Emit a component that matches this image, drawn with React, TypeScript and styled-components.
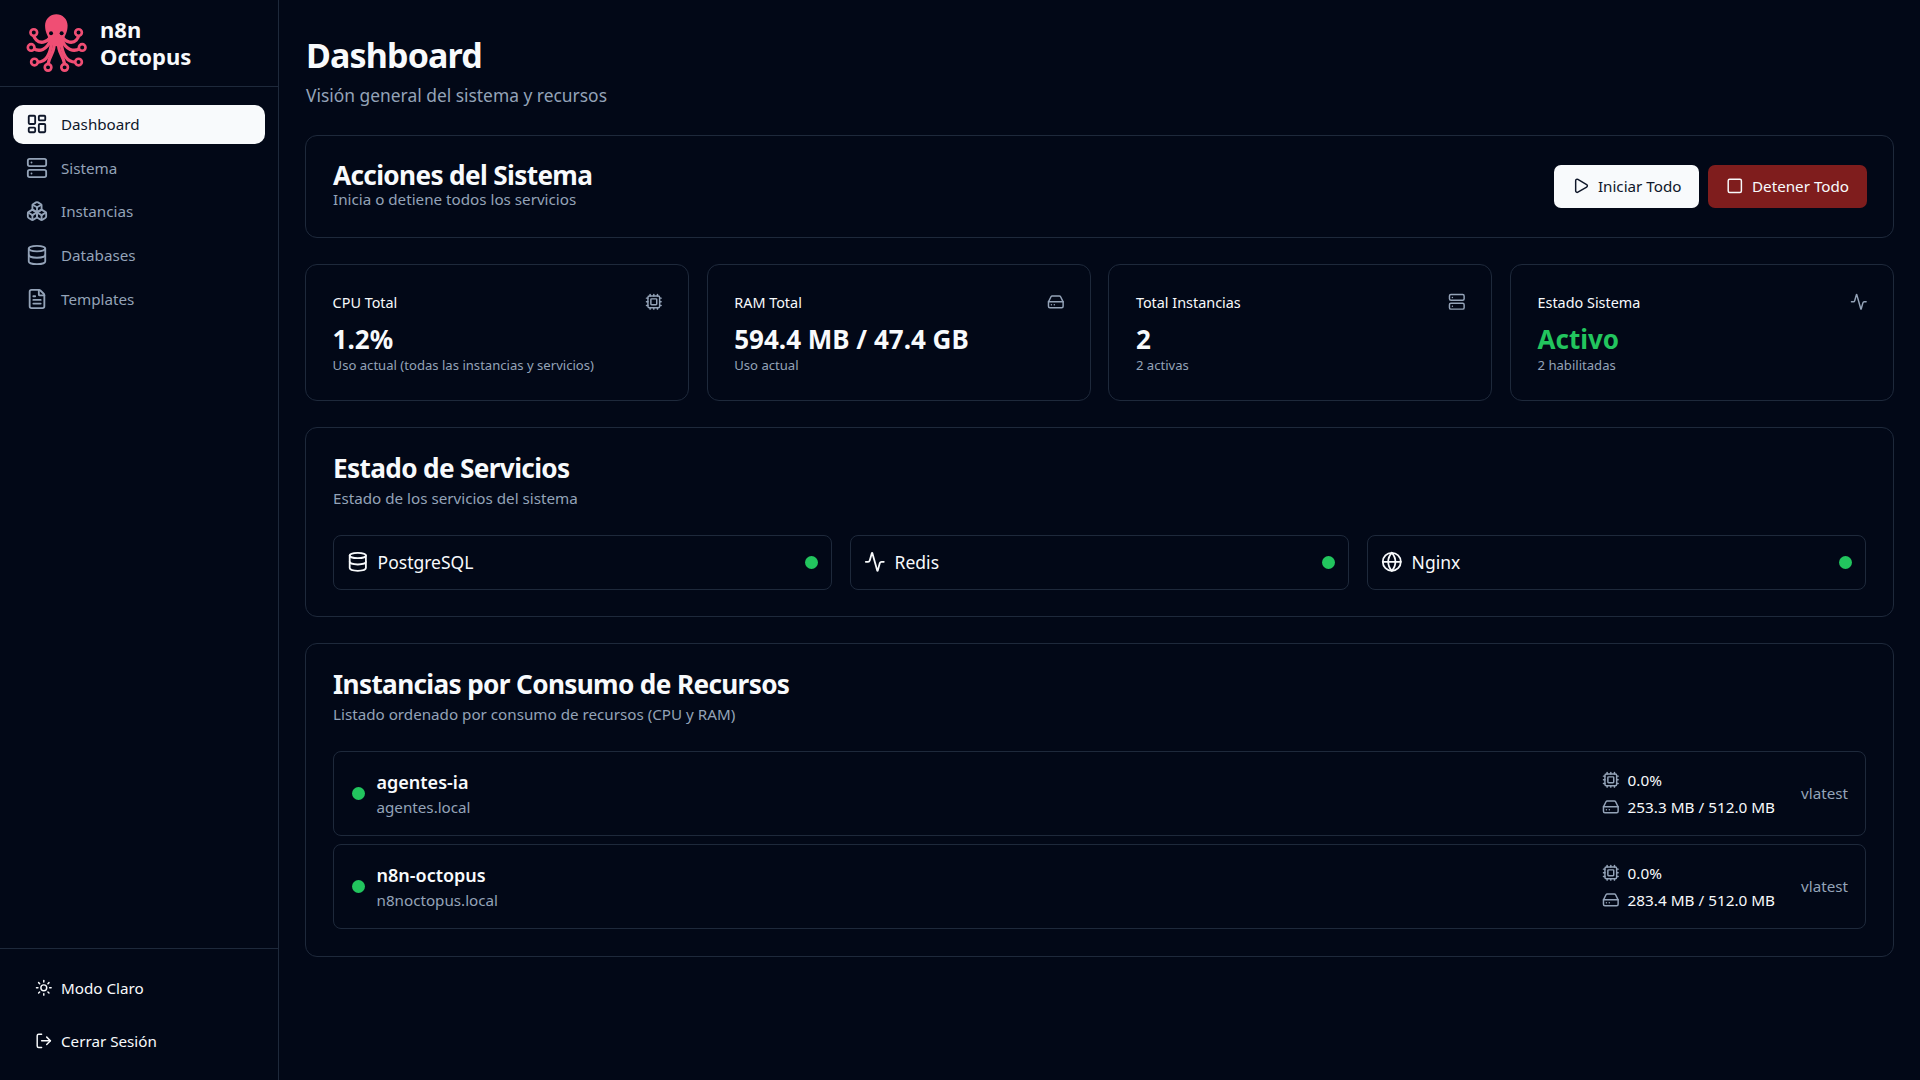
import React from "react";
import styled, { createGlobalStyle } from "styled-components";
import {
  Activity,
  Boxes,
  Cpu,
  Database,
  FileText,
  Globe,
  HardDrive,
  LayoutDashboard,
  LogOut,
  Play,
  Server,
  Square,
  Sun,
} from "lucide-react";

const GlobalStyle = createGlobalStyle`
  html, body, #root {
    margin: 0;
    height: 100%;
  }
  body {
    background: #020817;
    color: #f8fafc;
    font-family: "Noto Sans", sans-serif;
  }
  * {
    box-sizing: border-box;
  }
`;

const Shell = styled.div`
  display: flex;
  height: 1080px;
  overflow: hidden;
`;

const Sidebar = styled.aside`
  width: 279px;
  flex-shrink: 0;
  border-right: 1px solid #1e293b;
  display: flex;
  flex-direction: column;
`;

const Brand = styled.div`
  height: 87px;
  padding-left: 25px;
  border-bottom: 1px solid #1e293b;
  display: flex;
  align-items: center;
  gap: 11px;
`;

const BrandName = styled.div`
  font-size: 22px;
  line-height: 27px;
  font-weight: 700;
`;

const Nav = styled.nav`
  flex: 1;
  padding: 18.4px 13px;
  display: flex;
  flex-direction: column;
  gap: 4.75px;
`;

const NavItem = styled.a<{ $active?: boolean }>`
  height: 39px;
  padding: 0 0 2px 13px;
  border-radius: 10px;
  display: flex;
  align-items: center;
  gap: 13px;
  font-size: 15.2px;
  color: ${(props) => (props.$active ? "#0f172a" : "#94a3b8")};
  background: ${(props) => (props.$active ? "#f8fafc" : "transparent")};
`;

const SidebarFooter = styled.div`
  height: 132px;
  padding: 19px 35px 0;
  border-top: 1px solid #1e293b;
  display: flex;
  flex-direction: column;
  gap: 13px;
`;

const FooterItem = styled.a`
  height: 40px;
  display: flex;
  align-items: center;
  gap: 8.4px;
  font-size: 15.2px;
  color: #f8fafc;
`;

const Main = styled.main`
  flex: 1;
  padding: 34px 26px 0;
  display: flex;
  flex-direction: column;
`;

const PageTitle = styled.h1`
  margin: 0 0 0 1px;
  font-size: 34px;
  line-height: 42px;
  font-weight: 700;
  letter-spacing: -0.025em;
`;

const PageSubtitle = styled.p`
  margin: 7px 0 28px 1px;
  font-size: 17.4px;
  line-height: 24px;
  color: #94a3b8;
`;

const Card = styled.section`
  border: 1px solid #1e293b;
  border-radius: 12px;
  padding: 23px 27px 26px;
`;

const ActionsCard = styled(Card)`
  height: 103px;
  padding: 0 26px 0 27px;
  display: flex;
  align-items: center;
  justify-content: space-between;
`;

const ActionsText = styled.div`
  padding-bottom: 2px;
`;

const ActionsTitle = styled.h2`
  margin: 0;
  font-size: 26.2px;
  line-height: 27px;
  font-weight: 700;
  letter-spacing: -0.025em;
`;

const CardSubtitle = styled.p`
  margin: 0;
  font-size: 15.2px;
  line-height: 20px;
  color: #94a3b8;
`;

const Buttons = styled.div`
  display: flex;
  gap: 9px;
`;

const ActionButton = styled.button<{ $danger?: boolean }>`
  height: 43px;
  padding: 0 18px 2px 18px;
  border: none;
  border-radius: 7px;
  display: flex;
  align-items: center;
  gap: 8px;
  font-family: inherit;
  font-size: 15.2px;
  color: ${(props) => (props.$danger ? "#f8fafc" : "#0f172a")};
  background: ${(props) => (props.$danger ? "#7f1d1d" : "#f8fafc")};
`;

const StatsGrid = styled.div`
  margin: 26px 0 26px;
  display: grid;
  grid-template-columns: repeat(4, 1fr);
  gap: 17.6px;
`;

const StatCard = styled(Card)`
  height: 137px;
  padding: 26px 25.6px 0 26.6px;
`;

const StatHeader = styled.div`
  display: flex;
  justify-content: space-between;
  align-items: center;
  height: 22px;
  color: #94a3b8;
`;

const StatLabel = styled.span`
  font-size: 14.4px;
  color: #f8fafc;
`;

const StatValue = styled.div<{ $green?: boolean }>`
  margin-top: 9px;
  font-size: 26px;
  line-height: 34px;
  font-weight: 700;
  color: ${(props) => (props.$green ? "#22c55e" : "#f8fafc")};
`;

const StatNote = styled.div`
  font-size: 13.1px;
  line-height: 18px;
  color: #94a3b8;
`;

const SectionTitle = styled.h2`
  margin: 0 0 3px;
  font-size: 26.2px;
  line-height: 34px;
  font-weight: 700;
  letter-spacing: -0.025em;
`;

const ServicesGrid = styled.div`
  margin-top: 27px;
  display: grid;
  grid-template-columns: repeat(3, 1fr);
  gap: 18px;
`;

const ServiceRow = styled.div`
  height: 55px;
  padding: 0 13px 1px 13px;
  border: 1px solid #1e293b;
  border-radius: 8px;
  display: flex;
  align-items: center;
  gap: 9px;
`;

const ServiceName = styled.span`
  flex: 1;
  font-size: 17.5px;
`;

const StatusDot = styled.span`
  width: 13px;
  height: 13px;
  border-radius: 50%;
  flex-shrink: 0;
  background: #22c55e;
`;

const InstancesCard = styled(Card)`
  margin-top: 26px;
  padding-bottom: 27px;
`;

const InstanceList = styled.div`
  margin-top: 27px;
  display: flex;
  flex-direction: column;
  gap: 8px;
`;

const InstanceRow = styled.div`
  height: 85px;
  padding: 0 17px 0 17.5px;
  border: 1px solid #1e293b;
  border-radius: 8px;
  display: flex;
  align-items: center;
  gap: 12px;
`;

const InstanceInfo = styled.div`
  flex: 1;
  padding-top: 1px;
`;

const InstanceName = styled.div`
  font-size: 18px;
  line-height: 25px;
  font-weight: 600;
`;

const InstanceHost = styled.div`
  font-size: 15.2px;
  line-height: 24px;
  color: #94a3b8;
`;

const Metrics = styled.div`
  margin-right: 14px;
  display: flex;
  flex-direction: column;
  gap: 3px;
`;

const Metric = styled.div`
  height: 24px;
  display: flex;
  align-items: center;
  gap: 8px;
  font-size: 15.3px;
  color: #f8fafc;
  svg {
    color: #94a3b8;
  }
`;

const Version = styled.span`
  padding-bottom: 1px;
  font-size: 15.2px;
  color: #94a3b8;
`;

const Octopus = () => (
  <svg width="64" height="61" viewBox="44 24 192 184" fill="none">
    <g stroke="#f04e74" strokeWidth="10" strokeLinecap="round">
      <path d="M120 98C108 114 88 116 78 106C72 100 70 96 70 92" />
      <path d="M156 98C168 114 188 116 198 106C204 100 205 96 205 92" />
      <path d="M120 108C108 135 88 142 70 132" />
      <path d="M156 108C168 135 190 142 208 132" />
      <path d="M124 112C120 148 108 172 82 172" />
      <path d="M152 112C156 148 170 172 195 172" />
      <path d="M131 116C134 142 117 152 113 178" />
      <path d="M145 116C142 142 159 152 163 178" />
    </g>
    <path
      d="M104 62C104 42 120 28 138 28C156 28 172 42 172 62C172 82 164 92 160 104C156 118 146 124 138 124C130 124 120 118 116 104C112 92 104 82 104 62Z"
      fill="#f04e74"
    />
    <circle cx="122" cy="85" r="6" fill="#020817" />
    <circle cx="154" cy="85" r="6" fill="#020817" />
    <g fill="#020817" stroke="#f04e74" strokeWidth="8">
      <circle cx="70" cy="83" r="10" />
      <circle cx="205" cy="83" r="10" />
      <circle cx="62" cy="128" r="10" />
      <circle cx="216" cy="128" r="10" />
      <circle cx="72" cy="172" r="10" />
      <circle cx="205" cy="172" r="10" />
      <circle cx="113" cy="188" r="10" />
      <circle cx="163" cy="188" r="10" />
    </g>
  </svg>
);

const navItems = [
  { label: "Dashboard", icon: LayoutDashboard, active: true },
  { label: "Sistema", icon: Server },
  { label: "Instancias", icon: Boxes },
  { label: "Databases", icon: Database },
  { label: "Templates", icon: FileText },
];

const stats = [
  { label: "CPU Total", icon: Cpu, value: "1.2%", note: "Uso actual (todas las instancias y servicios)" },
  { label: "RAM Total", icon: HardDrive, value: "594.4 MB / 47.4 GB", note: "Uso actual" },
  { label: "Total Instancias", icon: Server, value: "2", note: "2 activas" },
  { label: "Estado Sistema", icon: Activity, value: "Activo", note: "2 habilitadas", green: true },
];

const services = [
  { name: "PostgreSQL", icon: Database },
  { name: "Redis", icon: Activity },
  { name: "Nginx", icon: Globe },
];

const instances = [
  { name: "agentes-ia", host: "agentes.local", ram: "253.3 MB / 512.0 MB" },
  { name: "n8n-octopus", host: "n8noctopus.local", ram: "283.4 MB / 512.0 MB" },
];

const App: React.FC = () => (
  <Shell>
    <GlobalStyle />
    <Sidebar>
      <Brand>
        <Octopus />
        <BrandName>
          n8n
          <br />
          Octopus
        </BrandName>
      </Brand>
      <Nav>
        {navItems.map(({ label, icon: Icon, active }) => (
          <NavItem key={label} $active={active}>
            <Icon size={22} />
            {label}
          </NavItem>
        ))}
      </Nav>
      <SidebarFooter>
        <FooterItem>
          <Sun size={17.6} />
          Modo Claro
        </FooterItem>
        <FooterItem>
          <LogOut size={17.6} />
          Cerrar Sesión
        </FooterItem>
      </SidebarFooter>
    </Sidebar>
    <Main>
      <PageTitle>Dashboard</PageTitle>
      <PageSubtitle>Visión general del sistema y recursos</PageSubtitle>
      <ActionsCard>
        <ActionsText>
          <ActionsTitle>Acciones del Sistema</ActionsTitle>
          <CardSubtitle>Inicia o detiene todos los servicios</CardSubtitle>
        </ActionsText>
        <Buttons>
          <ActionButton>
            <Play size={17.6} />
            Iniciar Todo
          </ActionButton>
          <ActionButton $danger>
            <Square size={17.6} />
            Detener Todo
          </ActionButton>
        </Buttons>
      </ActionsCard>
      <StatsGrid>
        {stats.map(({ label, icon: Icon, value, note, green }) => (
          <StatCard key={label}>
            <StatHeader>
              <StatLabel>{label}</StatLabel>
              <Icon size={17.6} />
            </StatHeader>
            <StatValue $green={green}>{value}</StatValue>
            <StatNote>{note}</StatNote>
          </StatCard>
        ))}
      </StatsGrid>
      <Card>
        <SectionTitle>Estado de Servicios</SectionTitle>
        <CardSubtitle>Estado de los servicios del sistema</CardSubtitle>
        <ServicesGrid>
          {services.map(({ name, icon: Icon }) => (
            <ServiceRow key={name}>
              <Icon size={21.6} />
              <ServiceName>{name}</ServiceName>
              <StatusDot />
            </ServiceRow>
          ))}
        </ServicesGrid>
      </Card>
      <InstancesCard>
        <SectionTitle>Instancias por Consumo de Recursos</SectionTitle>
        <CardSubtitle>Listado ordenado por consumo de recursos (CPU y RAM)</CardSubtitle>
        <InstanceList>
          {instances.map(({ name, host, ram }) => (
            <InstanceRow key={name}>
              <StatusDot />
              <InstanceInfo>
                <InstanceName>{name}</InstanceName>
                <InstanceHost>{host}</InstanceHost>
              </InstanceInfo>
              <Metrics>
                <Metric>
                  <Cpu size={17.6} />
                  0.0%
                </Metric>
                <Metric>
                  <HardDrive size={17.6} />
                  {ram}
                </Metric>
              </Metrics>
              <Version>vlatest</Version>
            </InstanceRow>
          ))}
        </InstanceList>
      </InstancesCard>
    </Main>
  </Shell>
);

export default App;
